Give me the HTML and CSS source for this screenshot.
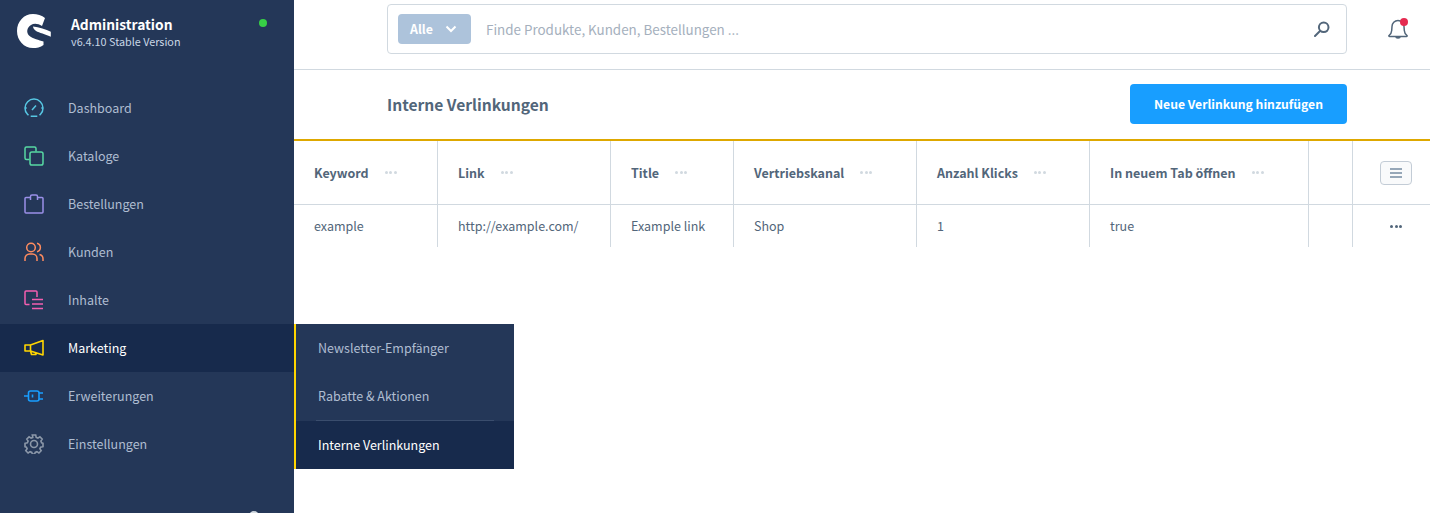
FILE: index.html
```html
<!DOCTYPE html>
<html lang="de">
<head>
<meta charset="utf-8">
<title>Interne Verlinkungen</title>
<link rel="stylesheet" href="styles.css">
</head>
<body>
<div class="app">
  <aside class="sidebar">
    <div class="brand">
      <svg class="logo" viewBox="0 0 34 34"><path fill="#fff" d="M16 0C20 0 25 1.500 28 4L25 12C21 9.500 17 9 14 11C10 13.500 9 18 12 21.500C16 25 22 26 26.500 27.500L26.500 31C23.500 33.500 19.500 34 16 34C7 34 0 26.500 0 17C0 7.500 7 0 16 0Z"/><path fill="#fff" d="M16 12.500C22 13 29 15.500 33.800 17.700L33.800 22.700C30.500 21.500 28 20.500 25.500 19.500C20.500 18 16.500 16.500 16 12.500Z"/></svg>
      <div class="brand-text">
        <div class="brand-title">Administration</div>
        <div class="brand-version">v6.4.10 Stable Version</div>
      </div>
      <span class="status-dot"></span>
    </div>
    <nav class="nav">
      <a class="nav-item"><svg class="nav-icon" viewBox="0 0 20 20" fill="none" stroke="#57c7e3" stroke-width="1.500"><path d="M4.500 17.300l-1-1A9 9 0 1 1 16.500 16.300l-1 1M6.700 18.300h6.600M8 12l4-4.500M1.500 10h1.200M17.300 10h1.200"/></svg><span>Dashboard</span></a>
      <a class="nav-item"><svg class="nav-icon" viewBox="0 0 20 20" fill="none" stroke="#57d9a3" stroke-width="1.500"><path d="M5.500 13.500H2.500a1.500 1.500 0 0 1-1.500-1.500V2.500A1.500 1.500 0 0 1 2.500 1h8A1.500 1.500 0 0 1 12 2.500v3"/><rect x="6" y="6" width="13" height="13" rx="1.800"/></svg><span>Kataloge</span></a>
      <a class="nav-item"><svg class="nav-icon" viewBox="0 0 20 20" fill="none" stroke="#9a90e8" stroke-width="1.500"><path d="M6.500 3.500H2a1 1 0 0 0-1 1V18a1 1 0 0 0 1 1h16a1 1 0 0 0 1-1V4.500a1 1 0 0 0-1-1h-4.500M6.500 6V2.500A1.500 1.500 0 0 1 8 1h4a1.500 1.500 0 0 1 1.500 1.500V6"/></svg><span>Bestellungen</span></a>
      <a class="nav-item"><svg class="nav-icon" viewBox="0 0 20 20" fill="none" stroke="#ff8c5f" stroke-width="1.500"><circle cx="7" cy="5.500" r="4.300"/><path d="M1 19v-2.500A4.500 4.500 0 0 1 5.500 12h3a4.500 4.500 0 0 1 4.500 4.500V19M13 1.300a4.300 4.300 0 0 1 0 8.400M15.500 12.500A4.500 4.500 0 0 1 19 17v2"/></svg><span>Kunden</span></a>
      <a class="nav-item"><svg class="nav-icon" viewBox="0 0 20 20" fill="none" stroke="#f35fb0" stroke-width="1.500"><path d="M5.500 14.500H2a1 1 0 0 1-1-1V2a1 1 0 0 1 1-1h10a1 1 0 0 1 1 1v5"/><path d="M8 9.500h11M8 14h11M8 18.500h11"/></svg><span>Inhalte</span></a>
      <a class="nav-item active"><svg class="nav-icon" viewBox="0 0 20 20" fill="none" stroke="#ffd500" stroke-width="1.600" stroke-linejoin="round"><path d="M1 7h5.500L19 2.500v14.500L6.500 13H1zM6.500 7v6M6.500 13l1 3.500h4.500l-.8-2.300"/></svg><span>Marketing</span></a>
      <a class="nav-item"><svg class="nav-icon" viewBox="0 0 20 20" fill="none" stroke="#189eff" stroke-width="1.600"><path d="M0 10h4.500M15 7h4M15 13h4M8.500 8.500v3"/><rect x="4.500" y="5" width="10.500" height="10" rx="2"/></svg><span>Erweiterungen</span></a>
      <a class="nav-item"><svg class="nav-icon" viewBox="0 0 20 20" fill="none" stroke="#8c98a9" stroke-width="1.600"><circle cx="10" cy="10" r="3.500"/><path d="M8.300 1h3.400l.5 2.400 1.700.7 2-1.300 2.300 2.300-1.300 2 .7 1.700L19 9.300v3.400l-2.400.5-.7 1.500 1.300 2-2.300 2.300-2-1.300-1.700.7-.5 1.600H8.300l-.5-1.600-1.700-.7-2 1.300-2.300-2.300 1.300-2-.7-1.500L1 12.700V9.300l2.400-.5.7-1.700-1.300-2 2.300-2.300 2 1.300 1.700-.7z"/></svg><span>Einstellungen</span></a>
    </nav>
    <span class="user-avatar"></span>
  </aside>

  <main class="content">
    <header class="topbar">
      <div class="search">
        <button class="search-type">Alle<svg class="chevron" viewBox="0 0 12 8" fill="none" stroke="#fff" stroke-width="2"><path d="M1.500 1.500L6 6l4.500-4.500"/></svg></button>
        <span class="search-placeholder">Finde Produkte, Kunden, Bestellungen ...</span>
        <svg class="search-icon" viewBox="0 0 16 16" fill="none" stroke="#52667a" stroke-width="2"><circle cx="9.700" cy="6.300" r="4.800"/><path d="M6 10L1 15" stroke-linecap="round"/></svg>
      </div>
      <div class="bell">
        <svg viewBox="0 0 20 20" width="20" height="20" fill="none" stroke="#52667a" stroke-width="1.500"><path d="M1 16.500c1.500-1 2.500-2.500 2.700-5l.3-4A6 6 0 0 1 10 1.500a6 6 0 0 1 6 6l.3 4c.2 2.500 1.200 4 2.700 5 .3.500 0 1-.5 1h-17c-.5 0-.8-.500-.5-1zM8 17.500c0 2 4 2 4 0"/></svg>
        <span class="bell-dot"></span>
      </div>
    </header>
    <div class="smartbar">
      <h1 class="page-title">Interne Verlinkungen</h1>
      <button class="primary">Neue Verlinkung hinzufügen</button>
    </div>
    <div class="grid">
      <div class="cell head"><b>Keyword</b><i class="dots"><s></s><s></s><s></s></i></div>
      <div class="cell head"><b>Link</b><i class="dots"><s></s><s></s><s></s></i></div>
      <div class="cell head"><b>Title</b><i class="dots"><s></s><s></s><s></s></i></div>
      <div class="cell head"><b>Vertriebskanal</b><i class="dots"><s></s><s></s><s></s></i></div>
      <div class="cell head"><b>Anzahl Klicks</b><i class="dots"><s></s><s></s><s></s></i></div>
      <div class="cell head"><b>In neuem Tab öffnen</b><i class="dots"><s></s><s></s><s></s></i></div>
      <div class="cell head"></div>
      <div class="cell head center"><span class="col-settings"><svg viewBox="0 0 12 10" width="12" height="10" fill="none" stroke="#758ca3" stroke-width="1.400"><path d="M0 1h12M0 5h12M0 9h12"/></svg></span></div>
      <div class="cell">example</div>
      <div class="cell">http://example.com/</div>
      <div class="cell">Example link</div>
      <div class="cell">Shop</div>
      <div class="cell">1</div>
      <div class="cell">true</div>
      <div class="cell"></div>
      <div class="cell center"><i class="dots dark"><s></s><s></s><s></s></i></div>
    </div>
  </main>

  <div class="flyout">
    <a class="fly-item">Newsletter-Empfänger</a>
    <a class="fly-item divided">Rabatte &amp; Aktionen</a>
    <a class="fly-item active">Interne Verlinkungen</a>
  </div>
</div>
</body>
</html>
```
FILE: styles.css
```css
* { box-sizing: border-box; }
html, body { margin: 0; height: 100%; overflow: hidden; }
body {
  font-family: "Noto Sans CJK SC", "Noto Sans", sans-serif;
  font-size: 12.5px;
  line-height: 20px;
  color: #52667a;
  background: #fff;
}
.app { display: flex; height: 513px; position: relative; overflow: hidden; }

/* Sidebar */
.sidebar { width: 294px; flex: none; background: #243758; position: relative; overflow: hidden; }
.brand { display: flex; align-items: flex-start; height: 84px; padding: 14px 0 0 17px; position: relative; }
.logo { width: 34px; height: 34px; flex: none; }
.brand-text { margin-left: 20px; margin-top: 0; }
.brand-title { font-size: 13.8px; font-weight: 700; line-height: 20px; color: #fff; }
.brand-version { font-size: 10.8px; line-height: 15px; color: #c8d6e5; }
.status-dot { position: absolute; left: 259px; top: 19px; width: 8px; height: 8px; border-radius: 50%; background: #37d046; }
.nav { display: flex; flex-direction: column; }
.nav-item { display: flex; align-items: center; height: 48px; padding-left: 24px; color: #afbdd1; }
.nav-item.active { background: #172a4c; color: #fff; }
.nav-icon { width: 20px; height: 20px; flex: none; margin-right: 24px; }
.user-avatar { position: absolute; left: 249px; top: 511px; width: 10px; height: 10px; border-radius: 50%; background: #d1d9e0; }

/* Content */
.content { flex: 1; min-width: 0; display: flex; flex-direction: column; }
.topbar { height: 70px; border-bottom: 1px solid #d1d9e0; display: flex; align-items: flex-start; padding: 4px 0 0 93px; position: relative; }
.search { width: 960px; height: 50px; border: 1px solid #d1d9e0; border-radius: 4px; display: flex; align-items: center; padding: 0 16px 0 10px; }
.search-type { height: 30px; width: 73px; border: 0; border-radius: 4px; background: #adc3db; color: #fff; font: 700 12.4px/20px "Noto Sans CJK SC", sans-serif; padding: 0 0 0 12px; display: flex; align-items: center; gap: 12px; }
.chevron { width: 12px; height: 8px; }
.search-placeholder { margin-left: 15px; flex: 1; color: #a5b0bd; font-size: 13.4px; }
.search-icon { width: 16px; height: 16px; }
.bell { position: absolute; left: 1094px; top: 19px; width: 20px; height: 20px; }
.bell svg { display: block; }
.bell-dot { position: absolute; left: 12px; top: -1px; width: 8px; height: 8px; border-radius: 50%; background: #e52b50; }
.smartbar { height: 71px; display: flex; align-items: center; justify-content: space-between; padding: 0 83px 2px 93px; border-bottom: 2px solid #dea800; }
.page-title { margin: 0; font-size: 15.600px; line-height: 24px; font-weight: 700; color: #52667a; }
.primary { width: 217px; height: 40px; border: 0; border-radius: 4px; background: #189eff; color: #fff; font: 700 12.200px/20px "Noto Sans CJK SC", sans-serif; padding: 0; }

/* Grid */
.grid { display: grid; grid-template-columns: 144px 173px 123px 183px 173px 219px 44px 78px; grid-template-rows: 64px 42px; }
.cell { display: flex; align-items: center; padding-left: 20px; border-right: 1px solid #d1d9e0; white-space: nowrap; }
.cell.head { border-bottom: 1px solid #d1d9e0; }
.cell:nth-child(8n) { border-right: 0; }
.cell b { font-weight: 700; }
.center { padding-left: 8px; justify-content: center; }
.dots { display: inline-flex; gap: 1.500px; margin-left: 16px; }
.dots s { width: 3px; height: 3px; border-radius: 50%; background: #d1d9e0; }
.dots.dark { margin-left: 0; }
.dots.dark s { background: #52667a; }
.col-settings { width: 32px; height: 24px; border: 1px solid #c3ccd6; border-radius: 4px; background: #f9fafb; display: flex; align-items: center; justify-content: center; }

/* Flyout */
.flyout { position: absolute; left: 294px; top: 324px; width: 220px; height: 145px; background: #243758; border-left: 2px solid #ffd500; display: flex; flex-direction: column; }
.fly-item { height: 48px; display: flex; align-items: center; padding-left: 22px; color: #afbdd1; position: relative; }
.fly-item.divided { height: 49px; padding-bottom: 1px; }
.fly-item.active { background: #172a4c; color: #fff; }
.fly-item.divided::after { content: ""; position: absolute; left: 20px; right: 20px; bottom: 0; height: 1px; background: #3a4d6d; }
```
